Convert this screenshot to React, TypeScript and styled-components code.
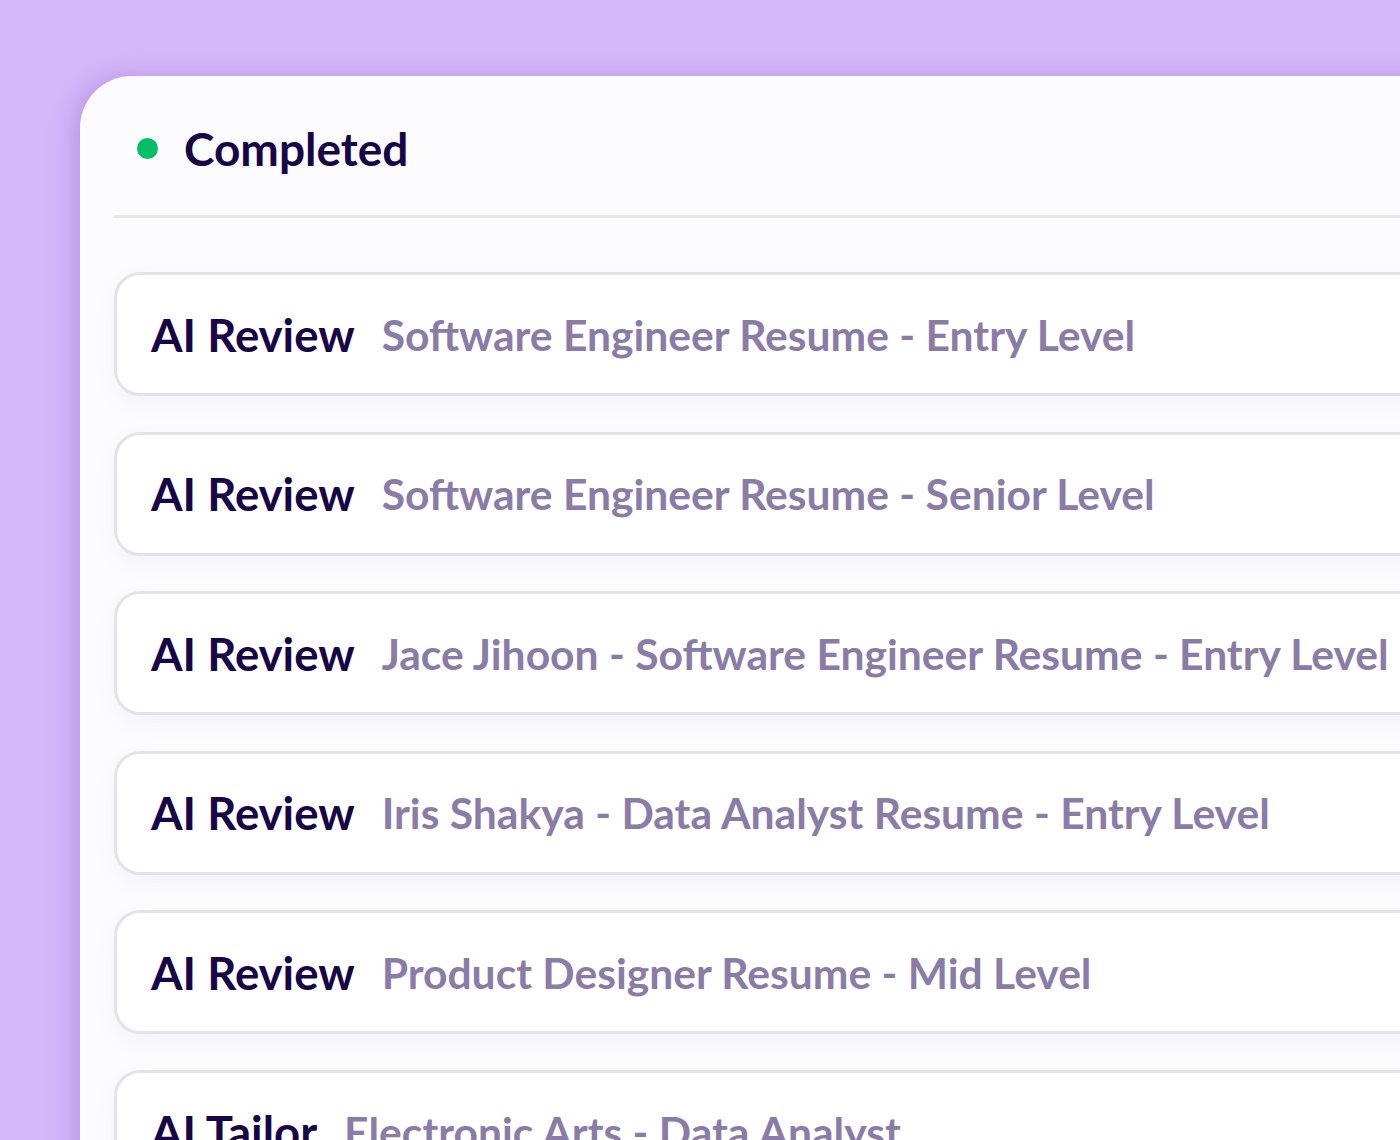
import styled, { createGlobalStyle } from "styled-components";

const GlobalStyle = createGlobalStyle`
  html, body {
    margin: 0;
    padding: 0;
    background: #d5b7f9;
    overflow: hidden;
    height: 1140px;
  }
  * {
    box-sizing: border-box;
  }
`;

const Page = styled.div`
  padding: 76px 0 0 80px;
  font-family: Lato, "Noto Sans", sans-serif;
`;

const Card = styled.div`
  width: 1500px;
  height: 1200px;
  background: #fcfcfe;
  border-top-left-radius: 52px;
  padding-left: 34px;
  box-shadow: -6px 0 24px rgba(140, 90, 200, 0.35);
`;

const Header = styled.div`
  display: flex;
  align-items: center;
  gap: 26px;
  height: 142px;
  padding: 5px 0 0 23px;
  border-bottom: 3px solid #e7e5ee;
`;

const Dot = styled.span`
  width: 21px;
  height: 21px;
  border-radius: 50%;
  background: #00bf66;
  flex-shrink: 0;
`;

const Heading = styled.h1`
  margin: 0;
  font-size: 46px;
  font-weight: 700;
  color: #170545;
`;

const List = styled.div`
  display: flex;
  flex-direction: column;
  gap: 35.6px;
  padding-top: 54px;
`;

const Row = styled.div`
  display: flex;
  align-items: center;
  gap: 27px;
  height: 124px;
  padding-left: 34px;
  background: #ffffff;
  border: 3px solid #e4e2ec;
  border-radius: 26px;
  box-shadow: 0 8px 20px rgba(120, 110, 160, 0.06);
  white-space: nowrap;
`;

const Kind = styled.span`
  font-size: 45.5px;
  font-weight: 700;
  color: #170545;
`;

const Title = styled.span`
  font-size: 42.6px;
  font-weight: 700;
  color: #8a7ca6;
`;

const items = [
  { kind: "AI Review", title: "Software Engineer Resume - Entry Level" },
  { kind: "AI Review", title: "Software Engineer Resume - Senior Level" },
  { kind: "AI Review", title: "Jace Jihoon - Software Engineer Resume - Entry Level" },
  { kind: "AI Review", title: "Iris Shakya - Data Analyst Resume - Entry Level" },
  { kind: "AI Review", title: "Product Designer Resume - Mid Level" },
  { kind: "AI Tailor", title: "Electronic Arts - Data Analyst" },
];

export default function App() {
  return (
    <Page>
      <GlobalStyle />
      <Card>
        <Header>
          <Dot />
          <Heading>Completed</Heading>
        </Header>
        <List>
          {items.map((item, i) => (
            <Row key={i}>
              <Kind>{item.kind}</Kind>
              <Title>{item.title}</Title>
            </Row>
          ))}
        </List>
      </Card>
    </Page>
  );
}
